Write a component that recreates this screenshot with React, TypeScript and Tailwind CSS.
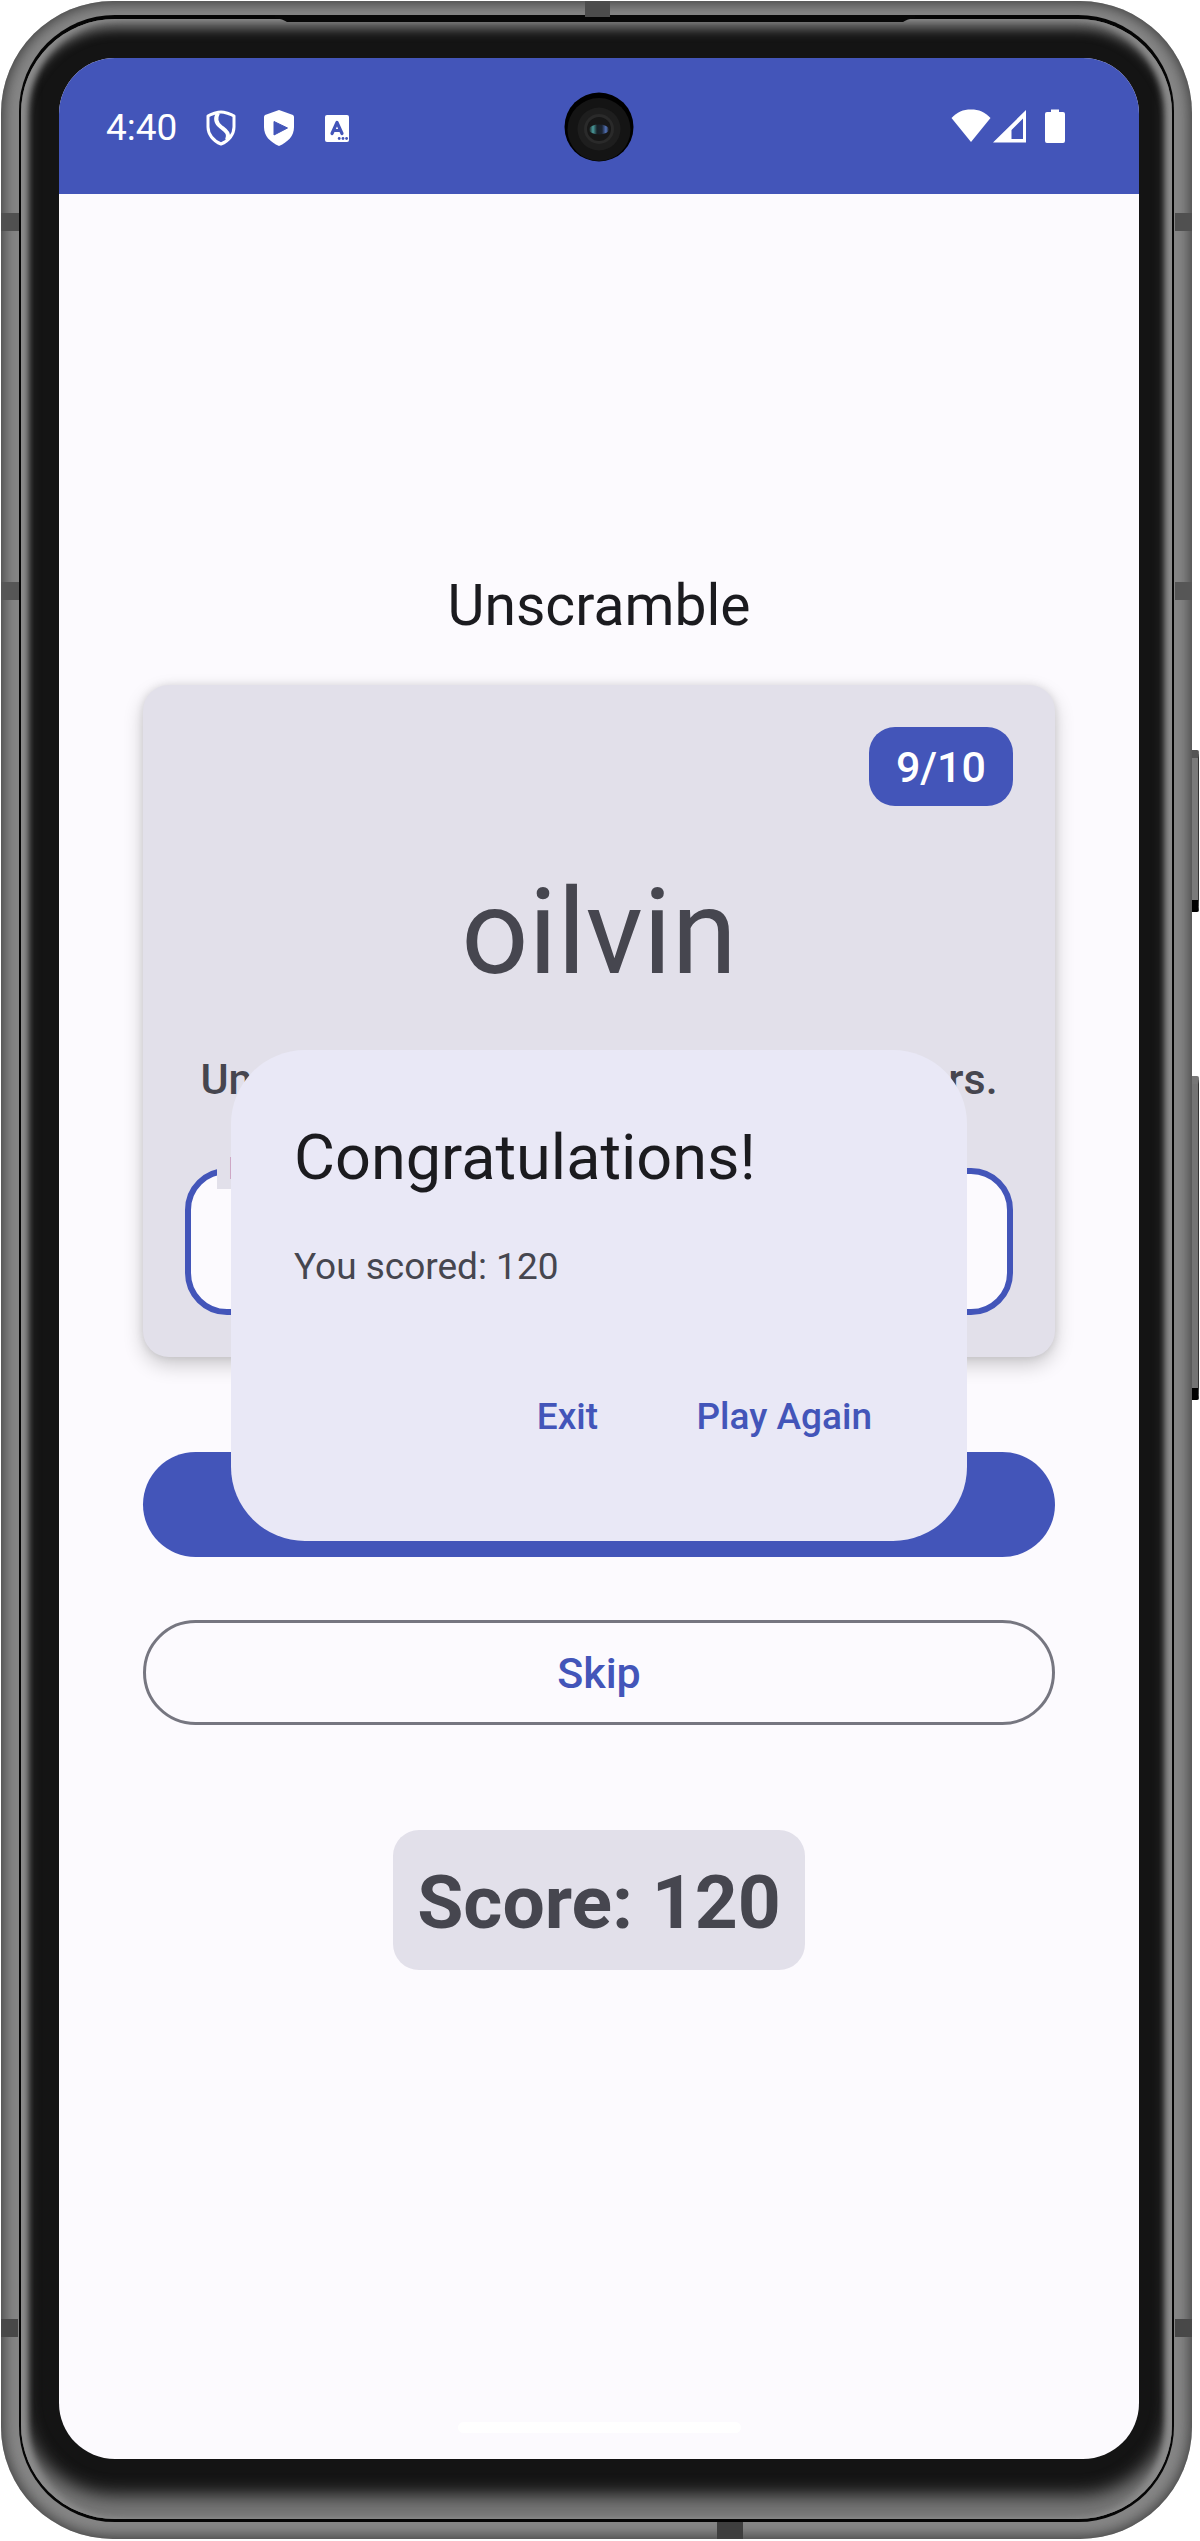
import React, { useState } from "react";

function AppShieldIcon() {
  return (
    <svg viewBox="0 0 30 36" className="h-9 w-[30px]" fill="none" stroke="white" strokeWidth="3" aria-hidden="true">
      <path d="M15 2 C12 2 5 4 2 6 V17 C2 24 7 31 15 34 C23 31 28 24 28 17 V6 C25 4 18 2 15 2 Z" strokeLinejoin="round" />
      <path d="M12 3 C8 10 11 14 15 17 C20 21 24 23 21 30" strokeWidth="4" />
    </svg>
  );
}

function PlayShieldIcon() {
  return (
    <svg viewBox="0 0 30 36" className="h-9 w-[30px]" aria-hidden="true">
      <path d="M15 0 L29 5 Q30 6 30 7 V17 C30 26 24 32 15 36 C6 32 0 26 0 17 V7 Q0 6 1 5 Z" fill="white" />
      <path d="M10 11.5 V25 L23.5 18 Z" fill="#4355b9" stroke="#4355b9" strokeLinejoin="round" />
    </svg>
  );
}

function LetterIcon() {
  return (
    <svg viewBox="0 0 24 27" className="h-[27px] w-6" aria-hidden="true">
      <rect width="24" height="27" rx="2" fill="white" />
      <path d="M7 18.5 L12 7.5 L17 18.5 M8.6 15.5 H15.4" fill="none" stroke="#4355b9" strokeWidth="3.2" strokeLinecap="round" strokeLinejoin="round" />
      <circle cx="14.2" cy="23.5" r="1.4" fill="#4355b9" />
      <circle cx="18" cy="23.5" r="1.4" fill="#4355b9" />
      <circle cx="21.6" cy="23.5" r="1.4" fill="#4355b9" />
    </svg>
  );
}

function StatusIcons() {
  return (
    <div className="flex items-start">
      <svg viewBox="0 0 40 34" className="h-[34px] w-10" fill="white" aria-hidden="true">
        <path d="M20 33 L0.5 9 C6 3 12 0.5 20 0.5 C28 0.5 34 3 39.5 9 Z" />
      </svg>
      <svg viewBox="0 0 33 34" className="ml-[2px] h-[34px] w-[33px]" fill="white" fillRule="evenodd" aria-hidden="true">
        <path d="M0 33.5 L33 1 V33.5 Z M18.5 30 H30 V9.5 L18.5 21 Z" />
      </svg>
      <svg viewBox="0 0 20 35" className="ml-[19px] h-[35px] w-5" fill="white" aria-hidden="true">
        <path d="M6 0.5 H14 V3 H18 Q20 3 20 5 V32 Q20 34 18 34 H2 Q0 34 0 32 V5 Q0 3 2 3 H6 Z" />
      </svg>
    </div>
  );
}

function Camera() {
  return (
    <svg viewBox="0 0 70 70" className="absolute left-1/2 top-[34px] size-[70px] -translate-x-1/2" aria-hidden="true">
      <defs>
        <linearGradient id="lens" x1="0" x2="1">
          <stop offset="0" stopColor="#191919" />
          <stop offset="0.2" stopColor="#4a9c9c" />
          <stop offset="0.4" stopColor="#172027" />
          <stop offset="0.65" stopColor="#1b2330" />
          <stop offset="0.85" stopColor="#5272b8" />
          <stop offset="1" stopColor="#191919" />
        </linearGradient>
      </defs>
      <circle cx="35" cy="35" r="34.5" fill="#000" />
      <circle cx="35" cy="37.5" r="31.5" fill="#141414" />
      <circle cx="35" cy="37" r="21.5" fill="#1e1e1e" />
      <circle cx="35" cy="37" r="15" fill="#2a2a2a" />
      <circle cx="35" cy="37" r="12" fill="#171717" />
      <ellipse cx="35" cy="37.5" rx="10" ry="5" fill="url(#lens)" />
    </svg>
  );
}

function FrameDetails() {
  return (
    <div aria-hidden="true">
      <div className="absolute left-px top-[213px] h-[18px] w-[18px] bg-[#505050]" />
      <div className="absolute left-px top-[582px] h-[18px] w-[18px] bg-[#565656]" />
      <div className="absolute bottom-[204px] left-px h-[18px] w-[17px] bg-[#484848]" />
      <div className="absolute right-[8px] top-[213px] h-[18px] w-[17px] bg-[#505050]" />
      <div className="absolute right-[8px] top-[582px] h-[18px] w-[17px] bg-[#565656]" />
      <div className="absolute bottom-[204px] right-[8px] h-[18px] w-[17px] bg-[#484848]" />
      <div className="absolute left-[585px] top-px h-4 w-[25px] bg-[#4c4c4c]" />
      <div className="absolute bottom-[2px] left-[717px] h-[17px] w-[26px] bg-[#3e3e3e]" />
      <div className="absolute right-px top-[750px] h-[162px] w-[7px] rounded-r-xs border-t-8 border-b-12 border-r border-t-[#555] border-b-black border-r-[#333] bg-[#7a7a7a]" />
      <div className="absolute right-px top-[1076px] h-[324px] w-[7px] rounded-r-xs border-t-8 border-b-12 border-r border-t-[#777] border-b-black border-r-[#333] bg-[#747474]" />
    </div>
  );
}

function Dialog({ score }: { score: number }) {
  return (
    <div className="absolute inset-x-0 bottom-[63px] top-[136px] flex items-center justify-center">
      <section
        role="dialog"
        aria-labelledby="dialog-title"
        className="w-[736px] max-w-full rounded-[74px] bg-[#e9e8f6] px-[63px] pb-[71px] pt-[66px]"
      >
        <h2 id="dialog-title" className="text-[63px] leading-[84px] text-[#1b1b1f]">Congratulations!</h2>
        <p className="mt-10 text-[37px] leading-[53px] text-[#46464f]">You scored: {score}</p>
        <div className="mt-[72px] flex justify-end gap-[21px] text-[37px] font-medium text-[#4355b9]">
          <button type="button" className="h-[105px] min-w-[152px] rounded-full px-8">Exit</button>
          <button type="button" className="h-[105px] min-w-[152px] rounded-full px-8">Play Again</button>
        </div>
      </section>
    </div>
  );
}

function Game({ score }: { score: number }) {
  const [guess, setGuess] = useState("");
  return (
    <main className="flex flex-1 flex-col items-center px-[84px] pt-[375px]">
      <h1 className="text-[57px] leading-[74px] text-[#1b1b1f]">Unscramble</h1>
      <section className="mt-[42px] flex w-full flex-col items-center rounded-[26px] bg-[#e2e0ea] p-[42px] text-[#46464f] shadow-[0_8px_20px_rgba(0,0,0,0.2),0_0_8px_rgba(0,0,0,0.1)]">
        <p className="flex h-[79px] items-center self-end rounded-[26px] bg-[#4355b9] px-[27px] pt-[2px] text-[43px] font-medium text-white">9/10</p>
        <p className="mt-[58px] text-[118px] leading-[138px]">oilvin</p>
        <p className="mt-[52px] text-[43px] font-medium leading-[50px]">Unscramble the word using all the letters.</p>
        <div className="relative mt-16 w-full">
          <input
            id="guess"
            type="text"
            value={guess}
            onChange={(e) => setGuess(e.target.value)}
            className="block h-[147px] w-full rounded-[42px] border-6 border-[#4355b9] bg-[#fcfafe] px-9 text-[43px] outline-none"
          />
          <label htmlFor="guess" className="absolute -top-[21px] left-8 bg-[#e2e0ea] px-[11px] text-[32px] leading-[42px] text-[#4355b9]">
            Enter your word
          </label>
        </div>
      </section>
      <button type="button" className="mt-[95px] h-[105px] w-full rounded-full bg-[#4355b9] text-[43px] font-medium text-white">Submit</button>
      <button type="button" className="mt-[63px] h-[105px] w-full rounded-full border-3 border-[#767680] pt-[2px] text-[43px] font-medium text-[#4355b9]">Skip</button>
      <p className="mt-[105px] flex h-[140px] items-center rounded-[26px] bg-[#e2e0ea] px-6 pt-1 text-[75px] font-bold text-[#46464f]">Score: {score}</p>
    </main>
  );
}

export default function App() {
  const score = 120;
  return (
    <div className="relative flex min-h-screen bg-white pb-[2px] pl-px pr-[8px] pt-px font-[Roboto,sans-serif]">
      <div className="flex flex-1 rounded-[112px] bg-[#868686] pb-[17px] pl-[18px] pr-[18px] pt-[14px] shadow-[inset_0_0_14px_2px_#3c3c3c]">
        <div className="flex flex-1 rounded-[96px] bg-[#050505] px-[2px] pb-[3px] pt-1">
          <div className="relative flex flex-1 rounded-[94px] bg-[#141414] pb-[60px] pl-[38px] pr-[33px] pt-[39px] shadow-[inset_7px_0_6px_#8c8c8c,inset_-7px_0_6px_#8c8c8c,inset_0_-24px_18px_#777,inset_0_10px_12px_#727272]">
            <div className="relative flex flex-1 flex-col overflow-hidden rounded-[56px] bg-[#fcfafe]">
              <header className="relative flex h-[136px] items-start justify-between bg-[#4355b9] pl-[47px] pr-[74px] pt-[51px]">
                <div className="flex items-center">
                  <time className="text-[37px] leading-[38px] text-white">4:40</time>
                  <div className="ml-[29px] flex items-center gap-7">
                    <AppShieldIcon />
                    <PlayShieldIcon />
                    <div className="pl-[3px]">
                      <LetterIcon />
                    </div>
                  </div>
                </div>
                <Camera />
                <StatusIcons />
              </header>
              <Game score={score} />
              <div className="mx-auto mb-[26px] h-[11px] w-[283px] rounded-full bg-white" />
              <Dialog score={score} />
            </div>
          </div>
        </div>
      </div>
      <svg viewBox="0 0 640 8" className="absolute left-[275px] top-[15px] h-2 w-[640px]" aria-hidden="true">
        <path d="M0 0 H640 V3 Q632 4 628 7 H12 Q8 4 0 3 Z" fill="#070707" />
      </svg>
      <FrameDetails />
    </div>
  );
}
